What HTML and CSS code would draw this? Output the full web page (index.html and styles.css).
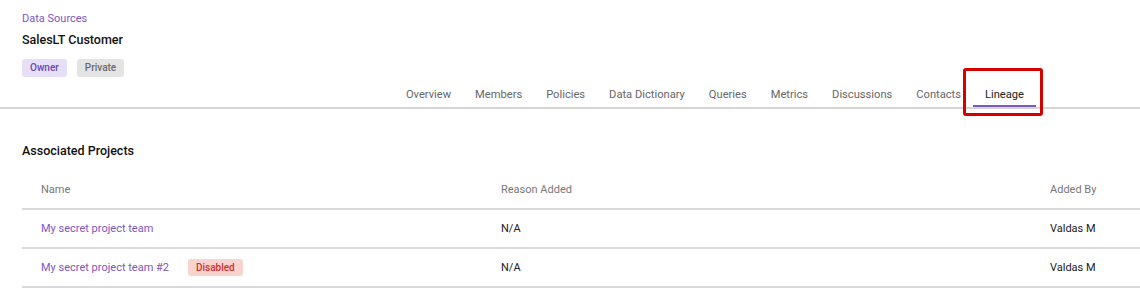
FILE: index.html
```html
<!DOCTYPE html>
<html lang="en">
<head>
    <meta charset="UTF-8">
    <title>SalesLT Customer</title>
    <link rel="stylesheet" href="styles.css">
</head>
<body>

    <!-- Page header -->
    <div class="header">
        <a class="crumb" href="#">Data Sources</a>
        <h1>SalesLT Customer</h1>
        <div class="badges">
            <span class="badge owner">Owner</span>
            <span class="badge private">Private</span>
        </div>
    </div>

    <!-- Tabs -->
    <nav class="tabs">
        <a class="tab" href="#">Overview</a>
        <a class="tab" href="#">Members</a>
        <a class="tab" href="#">Policies</a>
        <a class="tab" href="#">Data Dictionary</a>
        <a class="tab" href="#">Queries</a>
        <a class="tab" href="#">Metrics</a>
        <a class="tab" href="#">Discussions</a>
        <a class="tab" href="#">Contacts</a>
        <a class="tab active" href="#">Lineage<span class="highlight"></span></a>
    </nav>

    <!-- Associated projects -->
    <div class="content">
        <h2>Associated Projects</h2>
        <div class="table">
            <div class="row head">
                <div class="cell">Name</div>
                <div class="cell">Reason Added</div>
                <div class="cell">Added By</div>
            </div>
            <div class="row">
                <div class="cell"><a href="#">My secret project team</a></div>
                <div class="cell">N/A</div>
                <div class="cell">Valdas M</div>
            </div>
            <div class="row">
                <div class="cell"><a href="#">My secret project team #2</a><span class="badge disabled">Disabled</span></div>
                <div class="cell">N/A</div>
                <div class="cell">Valdas M</div>
            </div>
        </div>
    </div>

</body>
</html>
```

FILE: styles.css
```css
body {
    margin: 0;
    font-family: Roboto, "Liberation Sans", sans-serif;
    background-color: white;
    color: #212121;
    font-size: 11px;
}
a {
    text-decoration: none;
}
.header {
    padding: 11px 22px 0;
}
.crumb {
    display: block;
    color: #7e57c2;
    line-height: 16px;
}
h1 {
    margin: 3px 0 0;
    font-size: 12.5px;
    font-weight: 500;
    line-height: 20px;
    color: #111;
}
.badges {
    display: flex;
    gap: 10px;
    margin-top: 9px;
}
.badge {
    display: inline-block;
    height: 18px;
    line-height: 18px;
    padding: 0 8px;
    border-radius: 3px;
    font-size: 10px;
    font-weight: 500;
}
.owner {
    background: #e7def7;
    color: #6a4bb0;
}
.private {
    background: #e4e4e4;
    color: #6b6b6b;
}
.tabs {
    display: flex;
    justify-content: flex-end;
    padding-right: 104px;
    border-bottom: 2px solid #d6d6d6;
}
.tab {
    position: relative;
    padding: 10px 12px 2px;
    line-height: 16px;
    font-size: 11.15px;
    color: #666;
    border-bottom: 2px solid transparent;
}
.tab.active {
    color: #222;
    border-bottom-color: #7e57c2;
}
.highlight {
    position: absolute;
    left: -10px;
    right: -7px;
    top: -9px;
    bottom: -11px;
    border: 3px solid #d50000;
    border-radius: 3px;
}
.content {
    padding-left: 22px;
}
h2 {
    margin: 32px 0 0;
    font-size: 12.5px;
    font-weight: 500;
    line-height: 20px;
    color: #111;
}
.table {
    margin-top: 10px;
}
.row {
    display: grid;
    grid-template-columns: 460px 549px 1fr;
    height: 37px;
    align-items: center;
    border-bottom: 2px solid #dadada;
}
.row.head {
    color: #777;
}
.cell {
    padding-left: 19px;
    display: flex;
    align-items: center;
}
.cell a {
    color: #7e57c2;
}
.disabled {
    margin-left: 19px;
    height: 17px;
    line-height: 17px;
    background: #f9d3ce;
    color: #d32f2f;
}
```
